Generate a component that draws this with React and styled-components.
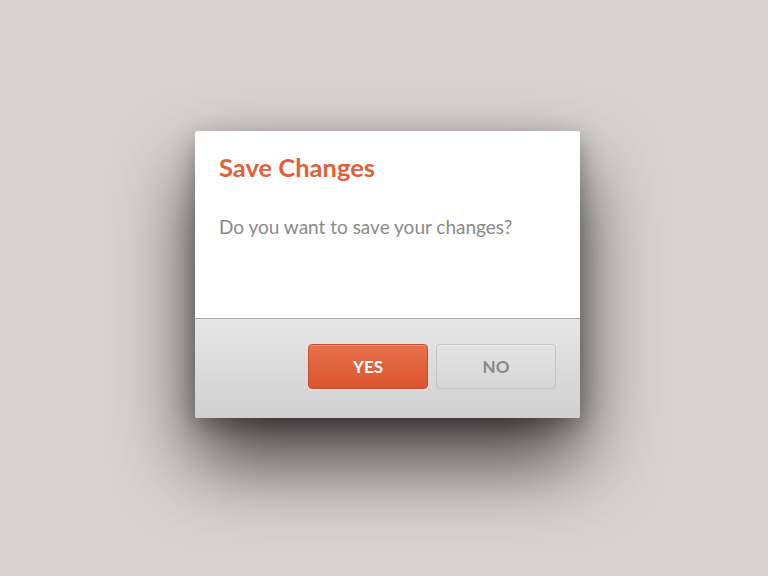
import styled, { createGlobalStyle } from "styled-components";

const GlobalStyle = createGlobalStyle`
  html, body {
    margin: 0;
    padding: 0;
    background: #d9d3d0;
  }
  body {
    font-family: Lato, "Open Sans", sans-serif;
  }
`;

const ConfirmDialog = ({ title, message, onYes, onNo }) => {
  return (
    <Dialog>
      <Content>
        <Title>{title}</Title>
        <Message>{message}</Message>
      </Content>
      <Footer>
        <Button primary onClick={onYes}>YES</Button>
        <Button onClick={onNo}>NO</Button>
      </Footer>
    </Dialog>
  );
};

const App = () => {
  return (
    <>
      <GlobalStyle />
      <Page>
        <ConfirmDialog
          title="Save Changes"
          message="Do you want to save your changes?"
        />
      </Page>
    </>
  );
};

export default App;

const Page = styled.div`
  width: 768px;
  height: 576px;
  box-sizing: border-box;
  padding: 131px 0 0 195px;
  background: #d9d3d0;
  overflow: hidden;
`;

const Dialog = styled.div`
  width: 385px;
  height: 287px;
  display: flex;
  flex-direction: column;
  border-radius: 3px;
  overflow: hidden;
  background: #fff;
  box-shadow: 0 42px 80px rgba(0, 0, 0, 0.72), 0 8px 24px rgba(0, 0, 0, 0.3);
`;

const Content = styled.div`
  height: 187px;
  box-sizing: border-box;
  padding: 20px 24px 0;
  background: #fff;
`;

const Title = styled.h2`
  margin: 0;
  font-family: Lato, sans-serif;
  font-weight: 700;
  font-size: 25.5px;
  line-height: 32px;
  color: #e0613a;
`;

const Message = styled.p`
  margin: 32px 0 0;
  font-family: Lato, sans-serif;
  font-size: 19px;
  line-height: 24px;
  color: #8a8a8a;
`;

const Footer = styled.div`
  flex: 1;
  display: flex;
  justify-content: flex-end;
  align-items: flex-start;
  gap: 8px;
  padding: 25px 24px 0;
  border-top: 1px solid #aaa9a8;
  background: linear-gradient(#e6e6e6, #d0d0d0);
`;

const Button = styled.button`
  width: 120px;
  height: 45px;
  box-sizing: border-box;
  border-radius: 4px;
  font-family: Lato, sans-serif;
  font-weight: 700;
  font-size: 17px;
  cursor: pointer;
  border: 1px solid ${(p) => (p.primary ? "#c2502c" : "#c3c3c3")};
  color: ${(p) => (p.primary ? "#fff" : "#888")};
  background: ${(p) =>
    p.primary
      ? "linear-gradient(#e6704b, #dc5530)"
      : "linear-gradient(#e4e4e4, #d6d6d6)"};
  box-shadow: ${(p) =>
    p.primary
      ? "inset 0 1px 0 rgba(255, 255, 255, 0.25), 0 1px 0 rgba(255, 255, 255, 0.35)"
      : "inset 0 1px 0 rgba(255, 255, 255, 0.5)"};
`;
